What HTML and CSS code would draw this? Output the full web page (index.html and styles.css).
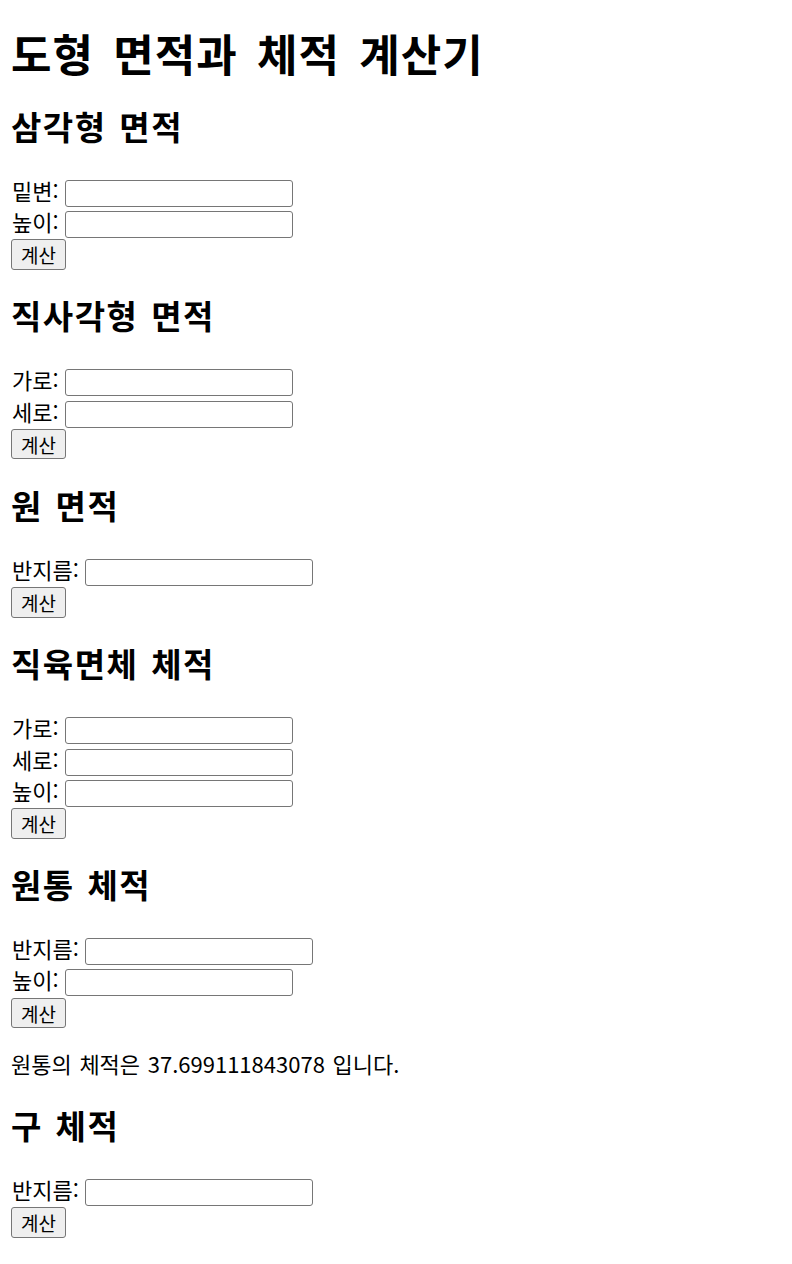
FILE: index.html
```html
<!DOCTYPE html>
<html lang="ko">
<head>
<meta charset="utf-8">
<title>도형 면적과 체적 계산기</title>
<link rel="stylesheet" href="styles.css">
</head>
<body>
<div class="page">
  <h1 class="title">도형 면적과 체적 계산기</h1>

  <section class="shape">
    <h2 class="shape-title">삼각형 면적</h2>
    <form class="calc">
      <div class="row"><label class="lbl">밑변:</label><input class="field" type="text"></div>
      <div class="row"><label class="lbl">높이:</label><input class="field" type="text"></div>
      <button class="btn" type="button">계산</button>
    </form>
  </section>

  <section class="shape">
    <h2 class="shape-title">직사각형 면적</h2>
    <form class="calc">
      <div class="row"><label class="lbl">가로:</label><input class="field" type="text"></div>
      <div class="row"><label class="lbl">세로:</label><input class="field" type="text"></div>
      <button class="btn" type="button">계산</button>
    </form>
  </section>

  <section class="shape">
    <h2 class="shape-title">원 면적</h2>
    <form class="calc">
      <div class="row"><label class="lbl">반지름:</label><input class="field" type="text"></div>
      <button class="btn" type="button">계산</button>
    </form>
  </section>

  <section class="shape">
    <h2 class="shape-title">직육면체 체적</h2>
    <form class="calc">
      <div class="row"><label class="lbl">가로:</label><input class="field" type="text"></div>
      <div class="row"><label class="lbl">세로:</label><input class="field" type="text"></div>
      <div class="row"><label class="lbl">높이:</label><input class="field" type="text"></div>
      <button class="btn" type="button">계산</button>
    </form>
  </section>

  <section class="shape">
    <h2 class="shape-title">원통 체적</h2>
    <form class="calc">
      <div class="row"><label class="lbl">반지름:</label><input class="field" type="text"></div>
      <div class="row"><label class="lbl">높이:</label><input class="field" type="text"></div>
      <button class="btn" type="button">계산</button>
    </form>
    <p class="result">원통의 체적은 37.699111843078 입니다.</p>
  </section>

  <section class="shape">
    <h2 class="shape-title">구 체적</h2>
    <form class="calc">
      <div class="row"><label class="lbl">반지름:</label><input class="field" type="text"></div>
      <button class="btn" type="button">계산</button>
    </form>
  </section>
</div>
</body>
</html>
```

FILE: styles.css
```css
html, body {
  margin: 0;
  padding: 0;
  background: #ffffff;
}

body {
  font-family: "Noto Sans CJK KR", "Noto Sans", sans-serif;
  font-size: 22px;
  color: #000000;
}

.page {
  padding: 0 11px;
}

.title {
  font-size: 44px;
  line-height: 54px;
  font-weight: 700;
  letter-spacing: 1px;
  word-spacing: 6px;
  margin: 26px 0 3px;
}

.shape-title {
  font-size: 33px;
  line-height: 44px;
  font-weight: 700;
  letter-spacing: 1.5px;
  word-spacing: 2px;
  margin: 23.6px 0 29px;
}

.calc {
  margin: 0;
  display: flex;
  flex-direction: column;
  align-items: flex-start;
}

.row {
  height: 31.33px;
  display: flex;
  align-items: flex-start;
  column-gap: 6px;
}

.lbl {
  font-size: 22px;
  line-height: 26px;
  padding-left: 1px;
}

.field {
  box-sizing: border-box;
  width: 228px;
  height: 27px;
  margin: 3px 0 0;
  border: 1px solid #767676;
  border-radius: 3px;
  background: #ffffff;
  padding: 1px 3px;
  font-family: "Noto Sans CJK KR", sans-serif;
  font-size: 18px;
}

.btn {
  box-sizing: border-box;
  width: 55px;
  height: 30.4px;
  margin: 0;
  padding: 0;
  border: 1px solid #767676;
  border-radius: 3px;
  background: #efefef;
  color: #000000;
  font-family: "Noto Sans CJK KR", sans-serif;
  font-size: 19px;
  line-height: 27px;
}

.result {
  font-size: 22px;
  line-height: 30px;
  word-spacing: 1.5px;
  margin: 20px 0 24.6px;
}
```
